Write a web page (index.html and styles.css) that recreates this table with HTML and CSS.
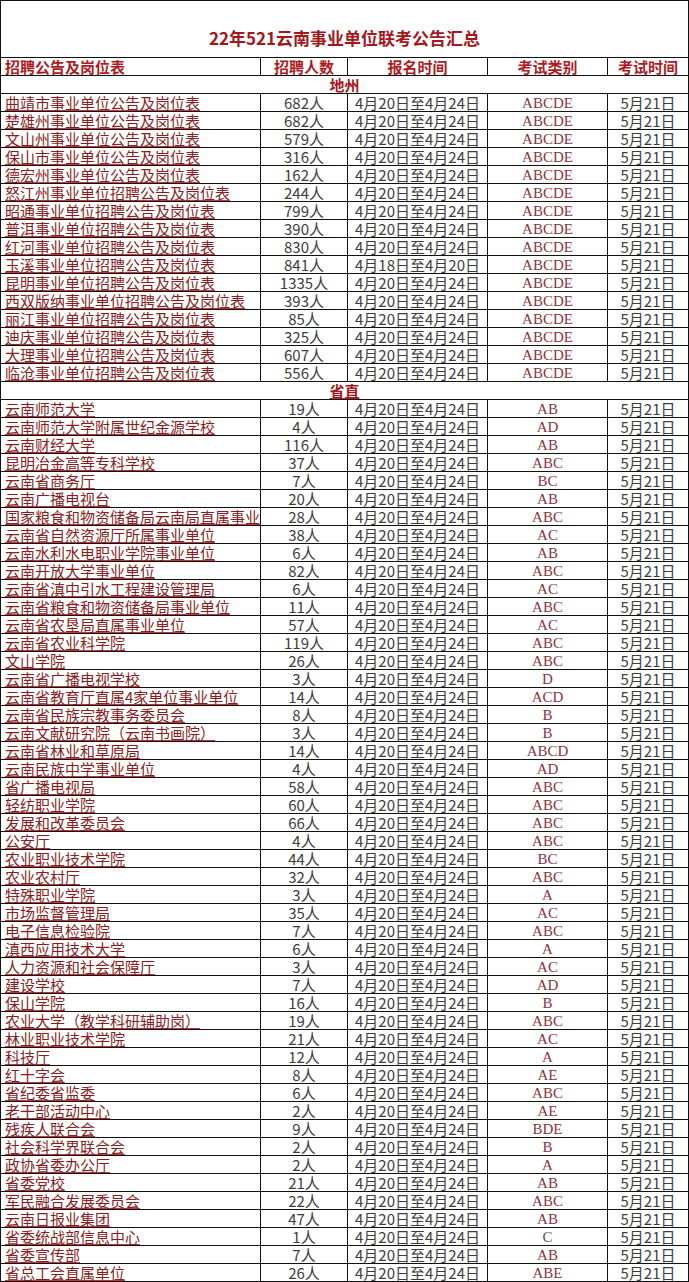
FILE: index.html
```html
<!DOCTYPE html>
<html lang="zh">
<head>
<meta charset="utf-8">
<title>22年521云南事业单位联考公告汇总</title>
<link rel="stylesheet" href="styles.css">
</head>
<body>
<table class="sheet">
<colgroup>
<col class="c-name"><col class="c-num"><col class="c-date"><col class="c-type"><col class="c-exam">
</colgroup>
<thead>
<tr class="title-row"><th colspan="5">22年521云南事业单位联考公告汇总</th></tr>
<tr class="head-row"><th class="left">招聘公告及岗位表</th><th>招聘人数</th><th>报名时间</th><th>考试类别</th><th>考试时间</th></tr>
</thead>
<tbody>
<tr class="section"><td colspan="5">地州</td></tr>
<tr><td class="name">曲靖市事业单位公告及岗位表</td><td>682人</td><td>4月20日至4月24日</td><td class="type">ABCDE</td><td>5月21日</td></tr>
<tr><td class="name">楚雄州事业单位公告及岗位表</td><td>682人</td><td>4月20日至4月24日</td><td class="type">ABCDE</td><td>5月21日</td></tr>
<tr><td class="name">文山州事业单位公告及岗位表</td><td>579人</td><td>4月20日至4月24日</td><td class="type">ABCDE</td><td>5月21日</td></tr>
<tr><td class="name">保山市事业单位公告及岗位表</td><td>316人</td><td>4月20日至4月24日</td><td class="type">ABCDE</td><td>5月21日</td></tr>
<tr><td class="name">德宏州事业单位公告及岗位表</td><td>162人</td><td>4月20日至4月24日</td><td class="type">ABCDE</td><td>5月21日</td></tr>
<tr><td class="name">怒江州事业单位招聘公告及岗位表</td><td>244人</td><td>4月20日至4月24日</td><td class="type">ABCDE</td><td>5月21日</td></tr>
<tr><td class="name">昭通事业单位招聘公告及岗位表</td><td>799人</td><td>4月20日至4月24日</td><td class="type">ABCDE</td><td>5月21日</td></tr>
<tr><td class="name">普洱事业单位招聘公告及岗位表</td><td>390人</td><td>4月20日至4月24日</td><td class="type">ABCDE</td><td>5月21日</td></tr>
<tr><td class="name">红河事业单位招聘公告及岗位表</td><td>830人</td><td>4月20日至4月24日</td><td class="type">ABCDE</td><td>5月21日</td></tr>
<tr><td class="name">玉溪事业单位招聘公告及岗位表</td><td>841人</td><td>4月18日至4月20日</td><td class="type">ABCDE</td><td>5月21日</td></tr>
<tr><td class="name">昆明事业单位招聘公告及岗位表</td><td>1335人</td><td>4月20日至4月24日</td><td class="type">ABCDE</td><td>5月21日</td></tr>
<tr><td class="name">西双版纳事业单位招聘公告及岗位表</td><td>393人</td><td>4月20日至4月24日</td><td class="type">ABCDE</td><td>5月21日</td></tr>
<tr><td class="name">丽江事业单位招聘公告及岗位表</td><td>85人</td><td>4月20日至4月24日</td><td class="type">ABCDE</td><td>5月21日</td></tr>
<tr><td class="name">迪庆事业单位招聘公告及岗位表</td><td>325人</td><td>4月20日至4月24日</td><td class="type">ABCDE</td><td>5月21日</td></tr>
<tr><td class="name">大理事业单位招聘公告及岗位表</td><td>607人</td><td>4月20日至4月24日</td><td class="type">ABCDE</td><td>5月21日</td></tr>
<tr><td class="name">临沧事业单位招聘公告及岗位表</td><td>556人</td><td>4月20日至4月24日</td><td class="type">ABCDE</td><td>5月21日</td></tr>
<tr class="section"><td colspan="5"><span class="u">省直</span></td></tr>
<tr><td class="name">云南师范大学</td><td>19人</td><td>4月20日至4月24日</td><td class="type">AB</td><td>5月21日</td></tr>
<tr><td class="name">云南师范大学附属世纪金源学校</td><td>4人</td><td>4月20日至4月24日</td><td class="type">AD</td><td>5月21日</td></tr>
<tr><td class="name">云南财经大学</td><td>116人</td><td>4月20日至4月24日</td><td class="type">AB</td><td>5月21日</td></tr>
<tr><td class="name">昆明冶金高等专科学校</td><td>37人</td><td>4月20日至4月24日</td><td class="type">ABC</td><td>5月21日</td></tr>
<tr><td class="name">云南省商务厅</td><td>7人</td><td>4月20日至4月24日</td><td class="type">BC</td><td>5月21日</td></tr>
<tr><td class="name">云南广播电视台</td><td>20人</td><td>4月20日至4月24日</td><td class="type">AB</td><td>5月21日</td></tr>
<tr><td class="name">国家粮食和物资储备局云南局直属事业</td><td>28人</td><td>4月20日至4月24日</td><td class="type">ABC</td><td>5月21日</td></tr>
<tr><td class="name">云南省自然资源厅所属事业单位</td><td>38人</td><td>4月20日至4月24日</td><td class="type">AC</td><td>5月21日</td></tr>
<tr><td class="name">云南水利水电职业学院事业单位</td><td>6人</td><td>4月20日至4月24日</td><td class="type">AB</td><td>5月21日</td></tr>
<tr><td class="name">云南开放大学事业单位</td><td>82人</td><td>4月20日至4月24日</td><td class="type">ABC</td><td>5月21日</td></tr>
<tr><td class="name">云南省滇中引水工程建设管理局</td><td>6人</td><td>4月20日至4月24日</td><td class="type">AC</td><td>5月21日</td></tr>
<tr><td class="name">云南省粮食和物资储备局事业单位</td><td>11人</td><td>4月20日至4月24日</td><td class="type">ABC</td><td>5月21日</td></tr>
<tr><td class="name">云南省农垦局直属事业单位</td><td>57人</td><td>4月20日至4月24日</td><td class="type">AC</td><td>5月21日</td></tr>
<tr><td class="name">云南省农业科学院</td><td>119人</td><td>4月20日至4月24日</td><td class="type">ABC</td><td>5月21日</td></tr>
<tr><td class="name">文山学院</td><td>26人</td><td>4月20日至4月24日</td><td class="type">ABC</td><td>5月21日</td></tr>
<tr><td class="name">云南省广播电视学校</td><td>3人</td><td>4月20日至4月24日</td><td class="type">D</td><td>5月21日</td></tr>
<tr><td class="name">云南省教育厅直属4家单位事业单位</td><td>14人</td><td>4月20日至4月24日</td><td class="type">ACD</td><td>5月21日</td></tr>
<tr><td class="name">云南省民族宗教事务委员会</td><td>8人</td><td>4月20日至4月24日</td><td class="type">B</td><td>5月21日</td></tr>
<tr><td class="name">云南文献研究院（云南书画院）</td><td>3人</td><td>4月20日至4月24日</td><td class="type">B</td><td>5月21日</td></tr>
<tr><td class="name">云南省林业和草原局</td><td>14人</td><td>4月20日至4月24日</td><td class="type">ABCD</td><td>5月21日</td></tr>
<tr><td class="name">云南民族中学事业单位</td><td>4人</td><td>4月20日至4月24日</td><td class="type">AD</td><td>5月21日</td></tr>
<tr><td class="name">省广播电视局</td><td>58人</td><td>4月20日至4月24日</td><td class="type">ABC</td><td>5月21日</td></tr>
<tr><td class="name">轻纺职业学院</td><td>60人</td><td>4月20日至4月24日</td><td class="type">ABC</td><td>5月21日</td></tr>
<tr><td class="name">发展和改革委员会</td><td>66人</td><td>4月20日至4月24日</td><td class="type">ABC</td><td>5月21日</td></tr>
<tr><td class="name">公安厅</td><td>4人</td><td>4月20日至4月24日</td><td class="type">ABC</td><td>5月21日</td></tr>
<tr><td class="name">农业职业技术学院</td><td>44人</td><td>4月20日至4月24日</td><td class="type">BC</td><td>5月21日</td></tr>
<tr><td class="name">农业农村厅</td><td>32人</td><td>4月20日至4月24日</td><td class="type">ABC</td><td>5月21日</td></tr>
<tr><td class="name">特殊职业学院</td><td>3人</td><td>4月20日至4月24日</td><td class="type">A</td><td>5月21日</td></tr>
<tr><td class="name">市场监督管理局</td><td>35人</td><td>4月20日至4月24日</td><td class="type">AC</td><td>5月21日</td></tr>
<tr><td class="name">电子信息检验院</td><td>7人</td><td>4月20日至4月24日</td><td class="type">ABC</td><td>5月21日</td></tr>
<tr><td class="name">滇西应用技术大学</td><td>6人</td><td>4月20日至4月24日</td><td class="type">A</td><td>5月21日</td></tr>
<tr><td class="name">人力资源和社会保障厅</td><td>3人</td><td>4月20日至4月24日</td><td class="type">AC</td><td>5月21日</td></tr>
<tr><td class="name">建设学校</td><td>7人</td><td>4月20日至4月24日</td><td class="type">AD</td><td>5月21日</td></tr>
<tr><td class="name">保山学院</td><td>16人</td><td>4月20日至4月24日</td><td class="type">B</td><td>5月21日</td></tr>
<tr><td class="name">农业大学（教学科研辅助岗）</td><td>19人</td><td>4月20日至4月24日</td><td class="type">ABC</td><td>5月21日</td></tr>
<tr><td class="name">林业职业技术学院</td><td>21人</td><td>4月20日至4月24日</td><td class="type">AC</td><td>5月21日</td></tr>
<tr><td class="name">科技厅</td><td>12人</td><td>4月20日至4月24日</td><td class="type">A</td><td>5月21日</td></tr>
<tr><td class="name">红十字会</td><td>8人</td><td>4月20日至4月24日</td><td class="type">AE</td><td>5月21日</td></tr>
<tr><td class="name">省纪委省监委</td><td>6人</td><td>4月20日至4月24日</td><td class="type">ABC</td><td>5月21日</td></tr>
<tr><td class="name">老干部活动中心</td><td>2人</td><td>4月20日至4月24日</td><td class="type">AE</td><td>5月21日</td></tr>
<tr><td class="name">残疾人联合会</td><td>9人</td><td>4月20日至4月24日</td><td class="type">BDE</td><td>5月21日</td></tr>
<tr><td class="name">社会科学界联合会</td><td>2人</td><td>4月20日至4月24日</td><td class="type">B</td><td>5月21日</td></tr>
<tr><td class="name">政协省委办公厅</td><td>2人</td><td>4月20日至4月24日</td><td class="type">A</td><td>5月21日</td></tr>
<tr><td class="name">省委党校</td><td>21人</td><td>4月20日至4月24日</td><td class="type">AB</td><td>5月21日</td></tr>
<tr><td class="name">军民融合发展委员会</td><td>22人</td><td>4月20日至4月24日</td><td class="type">ABC</td><td>5月21日</td></tr>
<tr><td class="name">云南日报业集团</td><td>47人</td><td>4月20日至4月24日</td><td class="type">AB</td><td>5月21日</td></tr>
<tr><td class="name">省委统战部信息中心</td><td>1人</td><td>4月20日至4月24日</td><td class="type plain">C</td><td>5月21日</td></tr>
<tr><td class="name">省委宣传部</td><td>7人</td><td>4月20日至4月24日</td><td class="type">AB</td><td>5月21日</td></tr>
<tr><td class="name">省总工会直属单位</td><td>26人</td><td>4月20日至4月24日</td><td class="type">ABE</td><td>5月21日</td></tr>
</tbody>
</table>
</body>
</html>
```
FILE: styles.css
```css
html, body {
  margin: 0;
  padding: 0;
  background: #ffffff;
}
.sheet {
  border-collapse: collapse;
  table-layout: fixed;
  width: 688px;
  font-family: "Noto Sans CJK SC", "Noto Sans", sans-serif;
  font-size: 15px;
  color: #3d3d3d;
}
.c-name { width: 260px; }
.c-num { width: 87px; }
.c-date { width: 140px; }
.c-type { width: 120px; }
.c-exam { width: 81px; }
.sheet td, .sheet th {
  border: 1px solid #111;
  height: 17px;
  padding: 0;
  line-height: 17px;
  text-align: center;
  white-space: nowrap;
  overflow: hidden;
  font-weight: 400;
}
.sheet .title-row th {
  height: 57px;
  padding-top: 17px;
  box-sizing: border-box;
  font-size: 17px;
  font-weight: 700;
  color: #a3171d;
  border-bottom: 1px solid #111;
}
.sheet .head-row th {
  font-weight: 700;
  color: #b01a22;
  font-size: 15px;
}
.sheet .head-row th.left {
  text-align: left;
  padding-left: 4px;
}
.sheet .section td {
  font-weight: 700;
  color: #a3171d;
  border-left: 1px solid #111;
  border-right: 1px solid #111;
}
.u {
  text-decoration: underline;
  text-decoration-color: #c2323a;
  text-underline-offset: 1px;
}
.sheet td.name {
  text-align: left;
  padding-left: 4px;
  color: #8a1c22;
  text-decoration: underline;
  text-decoration-color: #c4353c;
  text-underline-offset: 1px;
}
.sheet td.type {
  font-family: "Liberation Serif", serif;
  font-size: 15px;
  color: #8c3340;
  padding-top: 2px;
  height: 15px;
  line-height: 15px;
}
.sheet td.type.plain {
  color: #555555;
}
```
